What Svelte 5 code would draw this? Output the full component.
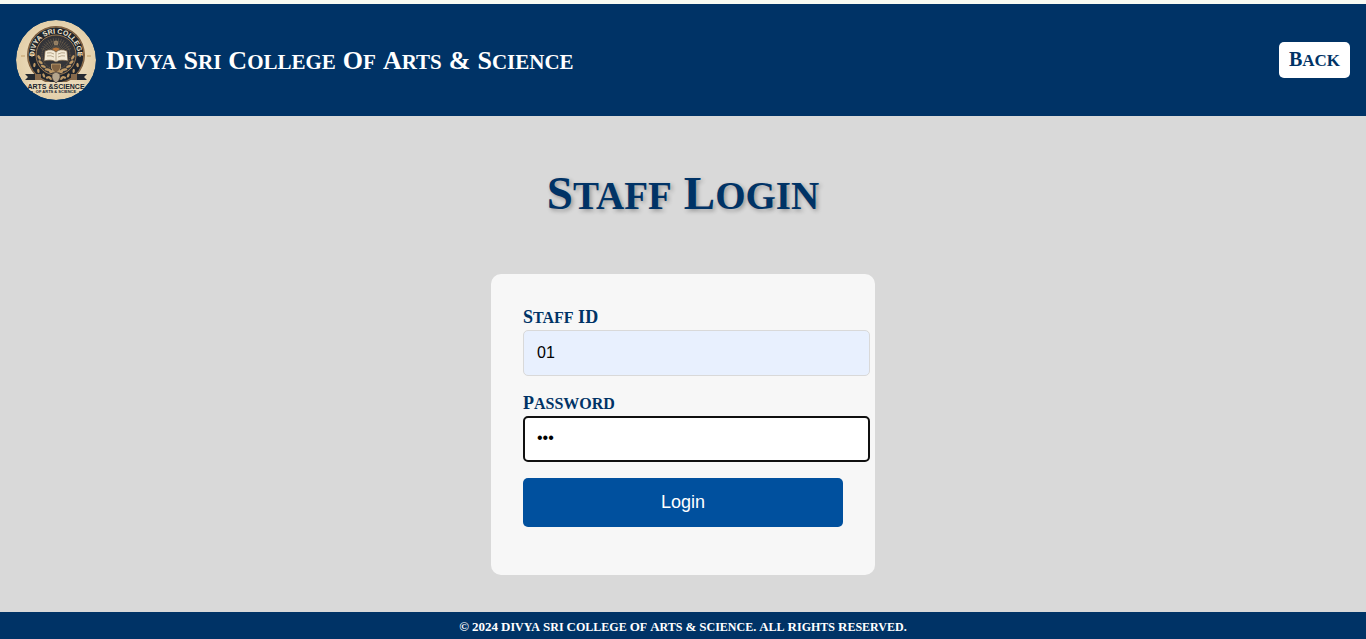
<script>
  const college = 'Divya Sri College Of Arts & Science';
  let staffId = $state('01');
  let password = $state('123');

  // Words set entirely at capital height.
  const isFull = (word) => /^(ID|&|©|\d+)$/.test(word);

  // Laurel leaves either side of the book in the crest.
  const leaves = [0, 1, 2, 3, 4, 5, 6].map((i) => {
    const a = ((8 + i * 17) * Math.PI) / 180;
    return { x: 17 * Math.cos(a), y: 17 * Math.sin(a), r: 8 + i * 17 };
  });
</script>

{#snippet caps(text)}
  {#each text.split(' ') as word, i}{i ? ' ' : ''}<span class="word" class:full={isFull(word)}>{word}</span>{/each}
{/snippet}

<div class="page">
  <header>
    <div class="brand">
      <svg class="logo" viewBox="0 0 80 80" role="img" aria-label="College crest">
        <defs>
          <radialGradient id="paper"><stop offset="0.6" stop-color="#ead9b8" /><stop offset="1" stop-color="#e3cfa9" /></radialGradient>
          <path id="arc" d="M19.2 41 A21.6 21.6 0 1 1 60.8 41" />
          <clipPath id="round"><circle cx="40" cy="40" r="40" /></clipPath>
        </defs>
        <g clip-path="url(#round)">
          <circle cx="40" cy="40" r="40" fill="url(#paper)" />
          <circle cx="40" cy="35" r="29" fill="#765538" />
          <circle cx="40" cy="35" r="27.8" fill="#20252d" stroke="#b08b5b" stroke-width="0.6" />
          <circle cx="40" cy="35" r="20" fill="#343438" stroke="#9a7850" stroke-width="1" />
          <circle cx="40" cy="35" r="14" fill="none" stroke="#8d7150" stroke-width="0.7" stroke-dasharray="1 1" />
          <g stroke="#6d6250" stroke-width="0.6">
            {#each Array(15) as _, i}<path d="M40 34 V18" transform="rotate({-70 + i * 10} 40 34)" />{/each}
          </g>
          <g fill="#bd9865">
            {#each leaves as l}
              <ellipse cx={40 + l.x} cy={35 + l.y} rx="1.3" ry="2.6" transform="rotate({l.r + 25} {40 + l.x} {35 + l.y})" />
              <ellipse cx={40 - l.x} cy={35 + l.y} rx="1.3" ry="2.6" transform="rotate({-l.r - 25} {40 - l.x} {35 + l.y})" />
            {/each}
            {#each leaves.slice(1) as l}
              <ellipse cx={40 + l.x * 1.4} cy={35 + l.y * 1.4} rx="1.2" ry="2.2" transform="rotate({l.r - 35} {40 + l.x * 1.4} {35 + l.y * 1.4})" />
              <ellipse cx={40 - l.x * 1.4} cy={35 + l.y * 1.4} rx="1.2" ry="2.2" transform="rotate({-l.r + 35} {40 - l.x * 1.4} {35 + l.y * 1.4})" />
            {/each}
          </g>
          <text class="ring"><textPath href="#arc" startOffset="50%">DIVYA SRI COLLEGE</textPath></text>
          <path d="M16 32 v5 M13.7 34.5 h5 M64 32 v5 M61.7 34.5 h5" stroke="#d2b17c" stroke-width="1" />
          <path d="M36 29 q4 -3 8 0 l-4 3z" fill="#b87538" />
          <circle cx="40" cy="23" r="2" fill="#8f7a60" stroke="#c7aa7c" stroke-width="0.5" />
          <path d="M29 31 Q36 28 40 32 Q44 28 51 31 L52 41 Q44 39 40 42 Q36 39 28 41 Z" fill="#f3ead6" stroke="#71593d" stroke-width="0.7" />
          <path d="M40 32 V42 M31 33 q4 -1 7 1 M31 36 q4 -1 7 1 M42 34 q4 -2 7 -1 M42 37 q4 -2 7 -1" fill="none" stroke="#a18c6d" stroke-width="0.7" />
          <path d="M35.5 44 H44.5 V48 Q43 52 40 53 Q37 52 35.5 48 Z" fill="#806242" stroke="#c6a675" stroke-width="0.8" />
          <path d="M9 54 H24 V60 H9 L12 57 Z M71 54 H56 V60 H71 L68 57 Z" fill="#252a31" />
          <path d="M19 54 H25 V60 H19 Z M55 54 H61 V60 H55 Z" fill="#86694b" />
          <path d="M12 62 H68 V71 H12 Z" fill="#ead9b8" />
          <path d="M36 54 L40 52 L44 54 V58 Q43 61 40 63 Q37 61 36 58 Z" fill="#b5a58d" stroke="#4b4037" stroke-width="0.8" />
          <path d="M5 36 h4 M71 36 h4" stroke="#cdb080" stroke-width="1.5" />
          <text class="motto" x="40" y="69">ARTS &amp;SCIENCE</text>
          <text class="submotto" x="40" y="73">OF ARTS &amp; SCIENCE</text>
          <path d="M13 71.5 h4 M63 71.5 h4" stroke="#252a31" stroke-width="0.7" />
        </g>
      </svg>
      <div class="name">{@render caps(college)}</div>
    </div>
    <a class="back" href="#back">{@render caps('Back')}</a>
  </header>

  <main>
    <h1>{@render caps('Staff Login')}</h1>
    <form onsubmit={(e) => e.preventDefault()}>
      <label for="staff-id">{@render caps('Staff ID')}</label>
      <input id="staff-id" class="filled" type="text" bind:value={staffId} />
      <label for="password">{@render caps('Password')}</label>
      <input id="password" class="active" type="password" bind:value={password} />
      <button type="submit">Login</button>
    </form>
  </main>

  <footer>{@render caps('© 2024 ' + college + '. All Rights Reserved.')}</footer>
</div>

<style>
  :global(body) {
    background: #d9d9d9;
  }
  .page {
    min-height: 100vh;
    box-sizing: border-box;
    display: flex;
    flex-direction: column;
    border-top: 4px solid #f8fbf3;
    font-family: 'Liberation Serif', serif;
    font-weight: 700;
    color: #003366;
  }
  .word {
    display: inline-block;
    font-size: var(--small);
    line-height: 1;
    text-transform: uppercase;
  }
  .word::first-letter,
  .full {
    font-size: var(--cap);
  }
  header {
    display: flex;
    align-items: center;
    justify-content: space-between;
    padding: 16px;
    background: #003366;
  }
  .brand {
    display: flex;
    align-items: center;
    gap: 10px;
  }
  .logo {
    width: 80px;
    height: 80px;
    flex: none;
    font-family: 'Liberation Sans', sans-serif;
    font-weight: 700;
    text-anchor: middle;
  }
  .ring {
    font-size: 7px;
    fill: #f5ead4;
  }
  .motto {
    font-size: 7px;
    fill: #20252d;
  }
  .submotto {
    font-size: 4px;
    fill: #20252d;
  }
  .name {
    --cap: 26px;
    --small: 21px;
    font-size: 28px;
    line-height: 32px;
    color: #fff;
  }
  .back {
    --cap: 20px;
    --small: 17px;
    padding: 6px 10px;
    border-radius: 5px;
    background: #fff;
    font-size: 18px;
    line-height: 24px;
    color: #003366;
    text-decoration: none;
  }
  main {
    flex: 1;
    display: flex;
    flex-direction: column;
    align-items: center;
  }
  h1 {
    --cap: 47px;
    --small: 39px;
    margin: 46px 0 50px;
    font-size: 48px;
    line-height: 62px;
    text-shadow: 2px 2px 4px rgba(0, 0, 0, 0.3);
  }
  form {
    width: 320px;
    max-width: calc(100% - 96px);
    margin-bottom: 37px;
    padding: 32px 32px 48px;
    border-radius: 10px;
    background: #f7f7f7;
  }
  label {
    --cap: 18px;
    --small: 16px;
    display: block;
    padding-bottom: 2px;
    font-size: 18px;
    line-height: 22px;
  }
  input {
    display: block;
    box-sizing: border-box;
    width: calc(100% + 27px);
    height: 46px;
    margin: 0 0 16px;
    padding: 0 13px;
    border: 1px solid #d9d9d9;
    border-radius: 5px;
    background: #fff;
    font-family: 'Liberation Sans', Arial, sans-serif;
    font-size: 16px;
    color: #000;
    outline: none;
  }
  .filled {
    background: #e8f0fe;
  }
  .active {
    padding: 0 12px 2px;
    border: 2px solid #101010;
  }
  button {
    display: block;
    width: 100%;
    padding: 14px;
    border: 0;
    border-radius: 5px;
    background: #00509e;
    font-family: 'Liberation Sans', Arial, sans-serif;
    font-size: 18px;
    line-height: 21px;
    color: #fff;
  }
  footer {
    --cap: 13px;
    --small: 12px;
    padding: 6px 16px 3px;
    background: #003366;
    font-size: 12px;
    line-height: 18px;
    text-align: center;
    color: #fff;
  }
</style>
